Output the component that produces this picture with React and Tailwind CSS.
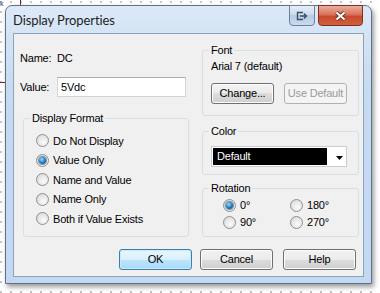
import React from 'react';

const Radio = ({ checked }) => (
  <span className="flex h-[13px] w-[13px] shrink-0 items-center justify-center rounded-full border border-[#8e8f8f] bg-[radial-gradient(circle_at_60%_65%,#fbfbfb,#d4d4d4)]">
    {checked && (
      <span className="h-[7px] w-[7px] rounded-full bg-[radial-gradient(circle_at_40%_35%,#9fdcfa,#1f76b8_55%,#0b3d6b)] shadow-[0_0_0_1px_#6a8fae]" />
    )}
  </span>
);

const Option = ({ label, checked, className = 'h-[19.5px]' }) => (
  <div className={`flex items-center gap-[4px] ${className}`}>
    <Radio checked={checked} />
    <span>{label}</span>
  </div>
);

const Group = ({ title, className, children }) => (
  <fieldset className={`rounded-[3px] border border-[#d5dfe5] ${className}`}>
    <legend className="ml-[6px] px-[2px] leading-[13px]">{title}</legend>
    {children}
  </fieldset>
);

const Btn = ({ children, variant, className = '' }) => {
  const look =
    variant === 'default'
      ? 'border-[#3c7fb1] bg-[linear-gradient(#eaf6fd_0%,#d9f0fc_50%,#bee6fd_50%,#a7d9f5_100%)] shadow-[inset_0_0_0_1px_#c9e8fa]'
      : variant === 'disabled'
        ? 'border-[#adb2b5] bg-[#f4f4f4] text-[#9a9a9a]'
        : 'border-[#707070] bg-[linear-gradient(#f2f2f2_0%,#ebebeb_50%,#dddddd_50%,#cfcfcf_100%)] shadow-[inset_0_0_0_1px_#fcfcfc]';
  return (
    <button className={`flex h-[21px] items-center justify-center rounded-[3px] border leading-none ${look} ${className}`}>
      {children}
    </button>
  );
};

export default function App() {
  return (
    <div className="relative h-[293px] w-[380px] overflow-hidden bg-white bg-[radial-gradient(circle,#b4b4b4_0.6px,transparent_1.1px)] bg-[length:10px_10px] bg-[position:-4px_-3px] pl-[5px] pt-[5px] font-['Liberation_Sans',Arial,sans-serif] text-[11px] tracking-[-0.2px] text-black">
      {/* bits of the schematic behind the dialog */}
      <div className="absolute left-[20px] top-0 h-[6px] w-px bg-[#8b1a1a]" />
      <div className="absolute left-0 top-[82px] h-px w-[6px] bg-[#8b1a1a]" />
      <span className="absolute left-0 top-0 text-[7px] leading-[7px] text-[#1d3f8f]">k</span>

      <div className="relative flex h-[279px] w-[367px] flex-col rounded-t-[7px] border border-[#5f7189] bg-[linear-gradient(#dce9f7,#c6dbf2_30%,#c3d8f1)] px-[7px] pb-[6px] shadow-[2px_3px_5px_rgba(0,0,0,0.4)]">
        {/* title bar */}
        <div className="flex h-[27px] items-start">
          <span className="mt-[6px] font-['Lato',sans-serif] text-[13px] leading-[16px] tracking-[-0.1px] text-[#1e1e1e]">
            Display Properties
          </span>
          <div className="-mt-px ml-auto mr-[1px] flex gap-[3px]">
            <div className="flex h-[21px] w-[26px] items-center justify-center rounded-b-[4px] border border-[#6e819a] bg-[linear-gradient(#e6eef8,#cbdaec_50%,#b9cce4_50%,#c9daef)]">
              <svg width="12" height="10" viewBox="0 0 12 10">
                <path d="M7 1.5H1.5V8.5H7" fill="none" stroke="#3f4f63" strokeWidth="1.4" />
                <path d="M4 5H10.5M8 2.5L10.5 5L8 7.5" fill="none" stroke="#3f4f63" strokeWidth="1.4" />
              </svg>
            </div>
            <div className="flex h-[21px] w-[45px] items-center justify-center rounded-b-[4px] border border-[#7e2f1f] bg-[linear-gradient(#eab0a2,#d8725a_45%,#c84a2c_55%,#d0603e)]">
              <svg width="13" height="10" viewBox="0 0 13 10">
                <path d="M2.5 1.5L10.5 8.5M10.5 1.5L2.5 8.5" stroke="#6b2a1c" strokeWidth="4" />
                <path d="M2.5 1.5L10.5 8.5M10.5 1.5L2.5 8.5" stroke="#ffffff" strokeWidth="2.2" />
              </svg>
            </div>
          </div>
        </div>

        {/* client area */}
        <div className="flex h-[244px] w-[351px] flex-col border border-[#8da2bb] bg-[#f0f0f0] pl-[6px] pt-[10px]">
          <div className="flex items-start">
            {/* left column */}
            <div className="mt-[8px] flex w-[168px] flex-col">
              <div className="flex h-[13px] items-center leading-[13px]">
                <span className="w-[37px]">Name:</span>
                <span>DC</span>
              </div>
              <div className="mt-[12px] flex h-[20px] items-center">
                <span className="w-[37px]">Value:</span>
                <div className="flex h-[20px] w-[129px] items-center border border-[#cfd5dc] border-t-[#abadb3] bg-white pl-[3px]">
                  5Vdc
                </div>
              </div>
              <Group title="Display Format" className="ml-[3px] mt-[15px] h-[125px] w-[166px]">
                <div className="flex flex-col pl-[12px] pt-[6px]">
                  <Option label="Do Not Display" />
                  <Option label="Value Only" checked />
                  <Option label="Name and Value" />
                  <Option label="Name Only" />
                  <Option label="Both if Value Exists" />
                </div>
              </Group>
            </div>

            {/* right column */}
            <div className="ml-[14px] flex w-[157px] flex-col">
              <Group title="Font" className="h-[72px]">
                <div className="flex flex-col pl-[8px] pt-[3px]">
                  <span className="leading-[13px]">Arial 7 (default)</span>
                  <div className="mt-[10px] flex gap-[10px]">
                    <Btn className="w-[63px]">Change...</Btn>
                    <Btn variant="disabled" className="w-[63px]">Use Default</Btn>
                  </div>
                </div>
              </Group>
              <Group title="Color" className="mt-[9px] h-[50px]">
                <div className="pl-[8px] pt-[8px]">
                  <div className="flex h-[21px] w-[136px] items-start border border-[#c9ccd1] bg-white pl-[1px] pt-[1px]">
                    <div className="flex h-[17px] w-[114px] items-center bg-black pl-[4px] text-white">Default</div>
                    <svg className="ml-[9px] mt-[8px]" width="7" height="4" viewBox="0 0 7 4">
                      <path d="M0 0H7L3.5 4Z" fill="#000" />
                    </svg>
                  </div>
                </div>
              </Group>
              <Group title="Rotation" className="mt-[7px] h-[55px]">
                <div className="grid grid-cols-[67px_auto] pl-[20px] pt-[2px]">
                  <Option label="0°" checked className="h-[17px]" />
                  <Option label="180°" className="h-[17px]" />
                  <Option label="90°" className="h-[17px]" />
                  <Option label="270°" className="h-[17px]" />
                </div>
              </Group>
            </div>
          </div>

          {/* dialog buttons */}
          <div className="mt-[12px] flex justify-end pr-[7px]">
            <Btn variant="default" className="w-[73px]">OK</Btn>
            <Btn className="ml-[8px] w-[73px]">Cancel</Btn>
            <Btn className="ml-[10px] w-[73px]">Help</Btn>
          </div>
        </div>
      </div>
    </div>
  );
}
